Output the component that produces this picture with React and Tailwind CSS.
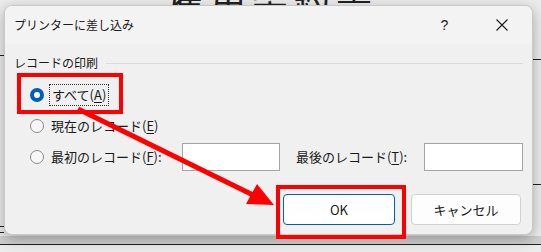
import React from 'react';

const jp = { fontFamily: '"Noto Sans CJK JP", "Noto Sans", sans-serif' };

function Radio({ checked }) {
  if (checked) {
    return (
      <span className="w-[14px] h-[14px] rounded-full bg-[#005fb8] flex items-center justify-center shrink-0">
        <span className="w-[6px] h-[6px] rounded-full bg-white" />
      </span>
    );
  }
  return <span className="w-[14px] h-[14px] rounded-full border border-[#8a8a8a] bg-[#f7f7f7] shrink-0" />;
}

function Key({ children }) {
  return <span className="underline underline-offset-2">{children}</span>;
}

export default function App() {
  return (
    <div className="relative w-[541px] h-[252px] overflow-hidden bg-[#ececec] text-[#1a1a1a]" style={jp}>
      {/* document behind the dialog */}
      <div className="absolute left-[168px] top-[-30px] text-[36px] text-[#222] tracking-[6px]">雇用契約書</div>
      <div className="absolute left-0 top-[244px] w-full h-[1px] bg-[#222]" />
      <div className="absolute left-[533px] top-[59px] w-[8px] h-[1px] bg-[#222]" />
      <div className="absolute left-[533px] top-[184px] w-[8px] h-[1px] bg-[#222]" />
      <div className="absolute left-0 top-[55px] w-[4px] h-[1px] bg-[#222]" />
      <div className="absolute left-0 top-[226px] w-[4px] h-[7px] border-y border-[#222]" />
      <div className="absolute left-0 top-[236px] w-[541px] h-[8px] bg-[#cfcfcf]" />

      {/* dialog window */}
      <div className="absolute left-[4px] top-[5px] w-[529px] h-[230px] rounded-[8px] border border-[#c9c9c9] bg-[#f0f0f0] shadow-[0_4px_14px_rgba(0,0,0,0.3)] overflow-hidden flex flex-col">
        <div className="h-[38px] bg-[#f3f3f3] flex items-center pl-[9px] pr-[2px] text-[12px] shrink-0">
          <span>プリンターに差し込み</span>
          <span className="ml-auto w-[57px] text-center text-[14px]" style={{ fontFamily: '"Liberation Sans", sans-serif' }}>?</span>
          <span className="w-[57px] flex justify-center">
            <svg width="12" height="12" viewBox="0 0 12 12">
              <path d="M0.5 0.5 L11.5 11.5 M11.5 0.5 L0.5 11.5" stroke="#1a1a1a" strokeWidth="1.1" />
            </svg>
          </span>
        </div>

        <div className="flex flex-col pl-[9px] pr-[9px]">
          <div className="mt-[11px] h-[16px] flex items-center text-[12px]">
            <span>レコードの印刷</span>
            <span className="flex-1 h-[1px] bg-[#dadada] ml-[8px]" />
          </div>

          <div className="mt-[8px] ml-[16px] flex flex-col text-[13px]">
            <div className="h-[31px] flex items-center">
              <Radio checked />
              <span className="ml-[5px] px-[2px] border border-dotted border-[#333] leading-[20px]">
                すべて(<Key>A</Key>)
              </span>
            </div>
            <div className="h-[31px] flex items-center">
              <Radio />
              <span className="ml-[6px] px-[1px]">現在のレコード(<Key>E</Key>)</span>
            </div>
            <div className="h-[31px] flex items-center">
              <div className="w-[153px] flex items-center">
                <Radio />
                <span className="ml-[6px] px-[1px]">最初のレコード(<Key>F</Key>):</span>
              </div>
              <div className="w-[98px] h-[28px] bg-white border border-[#a5a5a5]" />
              <span className="ml-[16px] w-[129px]">最後のレコード(<Key>T</Key>):</span>
              <div className="w-[99px] h-[28px] bg-white border border-[#a5a5a5]" />
            </div>
          </div>

          <div className="mt-[22px] flex justify-end gap-[16px] pr-[2px] text-[13px]" style={{ fontFamily: '"Noto Sans CJK JP", "Liberation Sans", sans-serif' }}>
            <button className="w-[112px] h-[31px] rounded-[4px] bg-white border border-[#005fb8] shadow-[inset_0_0_0_1px_#ffffff]">OK</button>
            <button className="w-[110px] h-[31px] rounded-[4px] bg-[#fdfdfd] border border-[#d2d2d2]">キャンセル</button>
          </div>
        </div>
      </div>

      {/* annotations */}
      <div className="absolute left-[17px] top-[73px] w-[106px] h-[41px] border-4 border-[#ff0000]" />
      <div className="absolute left-[276px] top-[185px] w-[130px] h-[54px] border-4 border-[#ff0000]" />
      <svg className="absolute left-0 top-0" width="541" height="252" viewBox="0 0 541 252">
        <line x1="78" y1="109" x2="253" y2="195" stroke="#ff0000" strokeWidth="5" />
        <polygon points="274,205 246,204 257,184" fill="#ff0000" />
      </svg>
    </div>
  );
}
